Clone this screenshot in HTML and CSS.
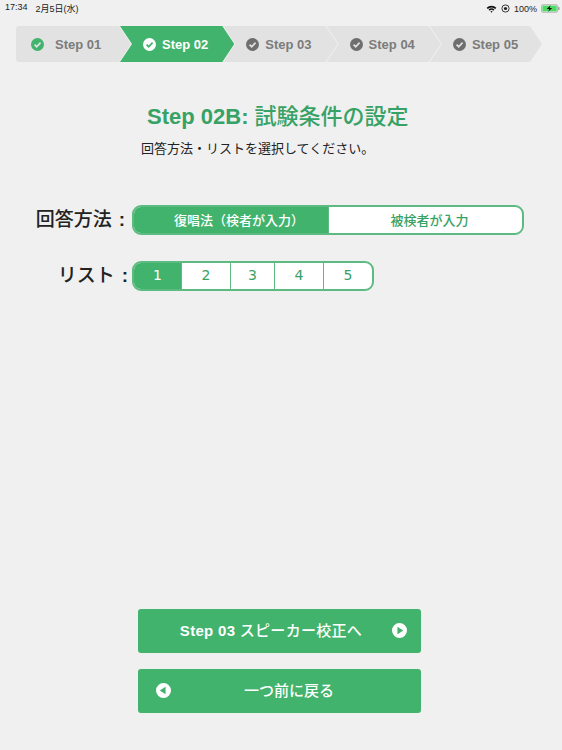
FILE: index.html

```html
<!DOCTYPE html>
<html lang="ja">
<head>
  <meta charset="UTF-8" />
  <title>Step 02B: 試験条件の設定</title>
  <meta name="viewport" content="width=device-width, initial-scale=1" />
  <link rel="stylesheet" href="styles.css">
</head>
<body>
  <svg class="icon-defs" width="0" height="0">
    <symbol id="check-icon" viewBox="0 0 14 14">
      <circle class="check-disc" cx="7" cy="7" r="7" />
      <path class="check-mark" d="M3.8 7.2 L6.1 9.4 L10.3 5" />
    </symbol>
  </svg>

  <div class="status-bar">
    <div class="status-time"><span>17:34</span><span>2月5日(水)</span></div>
    <div class="status-right">
      <svg class="wifi" viewBox="0 0 12 9" width="11" height="8">
        <path d="M0.5 3 A8 8 0 0 1 11.5 3 L10.2 4.4 A6 6 0 0 0 1.8 4.4 Z" />
        <path d="M2.7 5.2 A4.5 4.5 0 0 1 9.3 5.2 L8 6.5 A2.7 2.7 0 0 0 4 6.5 Z" />
        <path d="M4.8 7.3 A1.7 1.7 0 0 1 7.2 7.3 L6 8.7 Z" />
      </svg>
      <svg class="lock" viewBox="0 0 10 10" width="9" height="9">
        <circle cx="5" cy="5" r="4" fill="none" stroke="#222" stroke-width="1" />
        <circle cx="5" cy="5" r="1.8" fill="#222" />
      </svg>
      <span>100%</span>
      <svg class="battery" viewBox="0 0 20 9" width="19" height="9">
        <rect x="0.5" y="0.5" width="17" height="8" rx="1.5" fill="#eee" stroke="#8a8a8a" stroke-width="0.6" />
        <rect x="1.5" y="1.5" width="15" height="6" fill="#4cd964" />
        <rect x="18.2" y="3" width="1.2" height="3" fill="#8a8a8a" />
        <path d="M10 1 L6 5 H8.6 L7.6 8 L11.8 4 H9.2 Z" fill="#111" />
      </svg>
    </div>
  </div>

  <ol class="stepper">
    <li class="step first"><svg class="check" viewBox="0 0 14 14"><use href="#check-icon" /></svg>Step 01</li>
    <li class="step active"><svg class="check" viewBox="0 0 14 14"><use href="#check-icon" /></svg>Step 02</li>
    <li class="step"><svg class="check" viewBox="0 0 14 14"><use href="#check-icon" /></svg>Step 03</li>
    <li class="step"><svg class="check" viewBox="0 0 14 14"><use href="#check-icon" /></svg>Step 04</li>
    <li class="step last"><svg class="check" viewBox="0 0 14 14"><use href="#check-icon" /></svg>Step 05</li>
  </ol>

  <main class="content">
    <h1 class="title">Step 02B: <span class="jp">試験条件の設定</span></h1>
    <p class="lead">回答方法・リストを選択してください。</p>

    <div class="option-row method-row">
      <div class="option-label">回答方法<span class="colon">:</span></div>
      <div class="segments method">
        <button class="segment on">復唱法（検者が入力）</button>
        <button class="segment">被検者が入力</button>
      </div>
    </div>

    <div class="option-row list-row">
      <div class="option-label">リスト<span class="colon">:</span></div>
      <div class="segments list">
        <button class="segment on n1">1</button>
        <button class="segment n2">2</button>
        <button class="segment n3">3</button>
        <button class="segment n4">4</button>
        <button class="segment n5">5</button>
      </div>
    </div>
  </main>

  <div class="actions">
    <button class="action">
      <span class="action-text next-text">Step 03 <span class="jp">スピーカー校正へ</span></span>
      <svg class="action-icon" viewBox="0 0 16 16">
        <path fill="#fff" d="M8 0a8 8 0 1 0 0 16A8 8 0 0 0 8 0zM5.8 3.9 L12 8 L5.8 12.1z" fill-rule="evenodd" />
      </svg>
    </button>
    <button class="action">
      <svg class="action-icon" viewBox="0 0 16 16">
        <path fill="#fff" d="M8 0a8 8 0 1 0 0 16A8 8 0 0 0 8 0zM10.2 3.9 V12.1 L4 8z" fill-rule="evenodd" />
      </svg>
      <span class="action-text jp">一つ前に戻る</span>
    </button>
  </div>
</body>
</html>
```

FILE: styles.css

```css
* {
  box-sizing: border-box;
}

body {
  margin: 0;
  height: 750px;
  display: flex;
  flex-direction: column;
  background-color: #f0f0f0;
  font-family: "Liberation Sans", "Noto Sans CJK JP", sans-serif;
  color: #222;
  overflow: hidden;
}

.jp {
  font-weight: 500;
}

.icon-defs {
  position: absolute;
}

.status-bar {
  height: 14px;
  margin-top: 1px;
  padding: 1px 2px 0 5px;
  display: flex;
  justify-content: space-between;
  align-items: center;
  font-size: 9px;
}

.status-time {
  display: flex;
  gap: 8px;
}

.status-right {
  display: flex;
  align-items: center;
  gap: 4px;
}

.wifi {
  fill: #111;
}

.stepper {
  list-style: none;
  margin: 11px 20px 0 16px;
  padding: 0;
  height: 36px;
  display: flex;
}

.step {
  --disc: #6e6e6e;
  --mark: #e2e2e2;
  width: 114.3px;
  flex: none;
  margin-left: -11px;
  padding-left: 23px;
  display: flex;
  align-items: center;
  gap: 6px;
  font-size: 13px;
  font-weight: bold;
  color: #7b7b7b;
  background-color: #e2e2e2;
  clip-path: polygon(0 0, calc(100% - 12px) 0, 100% 50%, calc(100% - 12px) 100%, 0 100%, 12px 50%);
}

.step.first {
  --disc: #41b36c;
  width: 115px;
  margin-left: 0;
  padding-left: 15px;
  gap: 11px;
  border-radius: 3px 0 0 3px;
  clip-path: polygon(0 0, calc(100% - 12px) 0, 100% 50%, calc(100% - 12px) 100%, 0 100%);
}

.step.active {
  --disc: #fff;
  --mark: #41b36c;
  background-color: #41b36c;
  color: #fff;
}

.step.last {
  flex: 1;
}

.check {
  width: 13px;
  height: 13px;
  flex: none;
}

.check-disc {
  fill: var(--disc);
}

.check-mark {
  fill: none;
  stroke: var(--mark);
  stroke-width: 1.8;
}

.content {
  flex: 1;
}

.title {
  margin: 41px 0 0;
  padding-left: 147px;
  font-size: 22px;
  line-height: 28px;
  font-weight: bold;
  color: #37a266;
}

.lead {
  margin: 8px 0 0 141px;
  font-size: 13px;
  line-height: 20px;
}

.option-row {
  display: flex;
  align-items: center;
}

.method-row {
  margin-top: 46px;
}

.list-row {
  margin-top: 26px;
}

.option-label {
  width: 132px;
  padding-right: 7px;
  font-size: 19px;
  font-weight: 500;
  line-height: 30px;
  text-align: right;
  white-space: nowrap;
}

.list-row .option-label {
  padding-right: 4px;
}

.colon {
  margin-left: 7px;
  font-weight: bold;
}

.segments {
  display: flex;
  height: 30px;
  border: 2px solid #5dbb82;
  border-radius: 9px;
  background-color: #fff;
  overflow: hidden;
}

.method {
  width: 392px;
}

.list {
  width: 242px;
}

.segment {
  padding: 0 0 2px;
  border: none;
  border-left: 1.5px solid #5dbb82;
  background: none;
  font-family: inherit;
  font-size: 13px;
  font-weight: 500;
  color: #37a266;
}

.segment:first-child {
  border-left: none;
}

.segment.on {
  background-color: #41b36c;
  color: #fff;
}

.method .segment {
  flex: 1;
  padding-left: 8px;
}

.method .segment.on {
  flex: none;
  width: 194px;
  padding-left: 16px;
}

.list .segment {
  font-family: "DejaVu Sans", sans-serif;
  font-size: 14px;
  font-weight: normal;
}

.n1 { width: 47px; }
.n2 { width: 49px; }
.n3 { width: 44px; }
.n4 { width: 49px; }
.n5 { flex: 1; }

.actions {
  padding: 0 0 37px 138px;
  display: flex;
  flex-direction: column;
  gap: 16px;
}

.action {
  width: 283px;
  height: 44px;
  border: none;
  border-radius: 3px;
  padding: 0 14px 2px 18px;
  display: flex;
  align-items: center;
  background-color: #41b36c;
  color: #fff;
  font-family: inherit;
  font-size: 15px;
  font-weight: bold;
}

.action-text {
  flex: 1;
  padding-bottom: 1px;
  text-align: center;
}

.next-text {
  padding-right: 6px;
  letter-spacing: 0.3px;
}

.action-icon {
  width: 15px;
  height: 15px;
  flex: none;
}
```
